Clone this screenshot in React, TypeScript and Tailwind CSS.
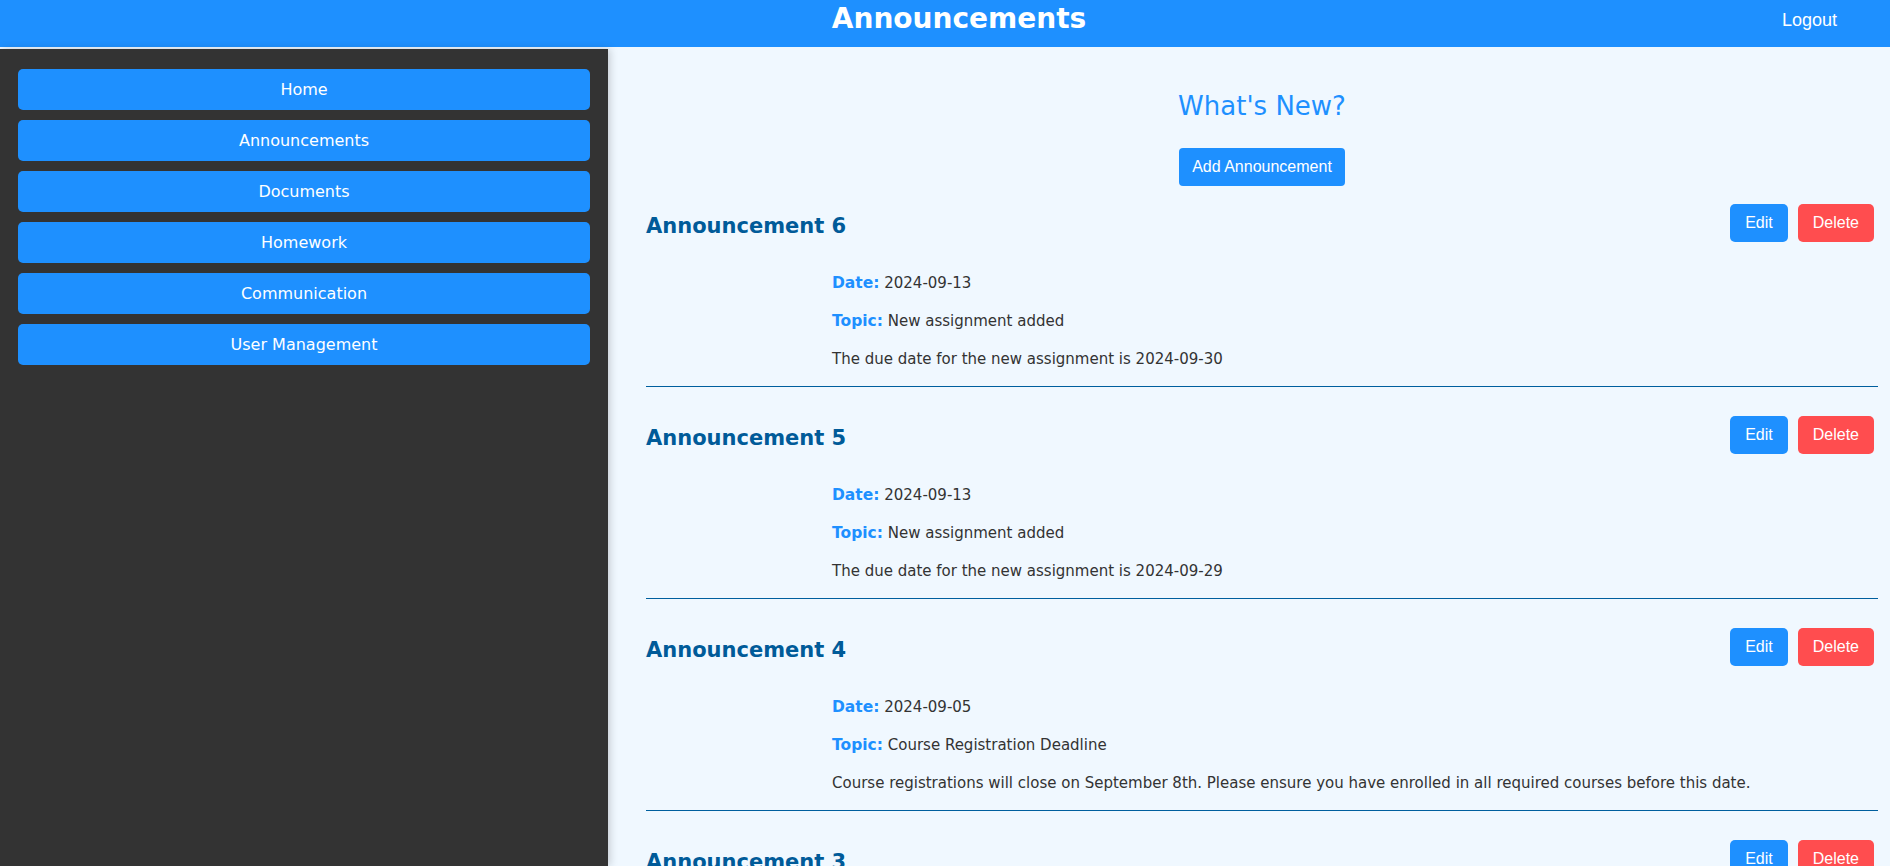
const NAV = ["Home", "Announcements", "Documents", "Homework", "Communication", "User Management"];

type Announcement = {
  id: number;
  date: string;
  topic: string;
  body: string;
};

const ANNOUNCEMENTS: Announcement[] = [
  { id: 6, date: "2024-09-13", topic: "New assignment added", body: "The due date for the new assignment is 2024-09-30" },
  { id: 5, date: "2024-09-13", topic: "New assignment added", body: "The due date for the new assignment is 2024-09-29" },
  {
    id: 4,
    date: "2024-09-05",
    topic: "Course Registration Deadline",
    body: "Course registrations will close on September 8th. Please ensure you have enrolled in all required courses before this date.",
  },
  { id: 3, date: "2024-09-01", topic: "Welcome Back", body: "Classes for the fall semester start on September 2nd." },
  { id: 2, date: "2024-08-25", topic: "Orientation", body: "Orientation for new students will be held on August 30th." },
  { id: 1, date: "2024-08-20", topic: "Portal Launch", body: "The new course portal is now available to all students." },
];

const SANS = "font-['DejaVu_Sans',sans-serif]";
const ARIAL = "font-['Liberation_Sans',Arial,sans-serif]";

function AnnouncementItem({ item }: { item: Announcement }) {
  return (
    <div className="mt-[18px] [&:not(:first-child)]:mt-[29px] border-b border-[#005f9e] pb-[16px]">
      <div className="flex h-[38px] items-center justify-between">
        <h3 className={`${SANS} mt-[7px] text-[21px] font-bold text-[#005b99]`}>Announcement {item.id}</h3>
        <div className={`${ARIAL} mr-[4px] flex gap-[10px]`}>
          <button className="h-[38px] rounded-[5px] bg-[#1e90ff] px-[15px] text-[16px] text-white">Edit</button>
          <button className="h-[38px] rounded-[5px] bg-[#ff4d4f] px-[15px] text-[16px] text-white">Delete</button>
        </div>
      </div>
      <div className={`${SANS} mt-[30px] space-y-[16px] pl-[186px] text-[15px] leading-[22px] text-[#333]`}>
        <p>
          <strong className="text-[15.5px] font-bold text-[#1e90ff]">Date:</strong> {item.date}
        </p>
        <p>
          <strong className="text-[15.5px] font-bold text-[#1e90ff]">Topic:</strong> {item.topic}
        </p>
        <p>{item.body}</p>
      </div>
    </div>
  );
}

export default function App() {
  return (
    <div className="flex h-screen flex-col overflow-hidden bg-[#f0f8ff]">
      <header className="grid h-[47px] shrink-0 grid-cols-[1fr_auto_1fr] bg-[#1e90ff] text-white">
        <div />
        <h1 className={`${SANS} pl-[28px] pt-[3px] text-[28px] font-bold leading-8`}>Announcements</h1>
        <div className="flex justify-end">
          <button className={`${ARIAL} self-start pr-[53px] pt-[9px] text-[18px] leading-[22px]`}>Logout</button>
        </div>
      </header>

      <div className="mt-[2px] flex min-h-0 flex-1">
        <aside className="relative z-10 flex w-[608px] shrink-0 flex-col gap-[10px] bg-[#333] px-[18px] pt-[20px] shadow-[2px_0_8px_rgba(0,0,0,0.18)]">
          {NAV.map((label) => (
            <button
              key={label}
              className={`${SANS} h-[41px] w-full rounded-[5px] bg-[#1e90ff] text-[16px] text-white`}
            >
              {label}
            </button>
          ))}
        </aside>

        <main className="min-w-0 flex-1 overflow-hidden pl-[38px] pr-[12px] pt-[42px]">
          <h2 className={`${SANS} text-center text-[26px] leading-[30px] text-[#1e90ff]`}>What's New?</h2>
          <div className="mt-[27px] flex justify-center">
            <button className={`${ARIAL} h-[38px] rounded-[4px] bg-[#1e90ff] px-[13px] text-[16px] text-white`}>
              Add Announcement
            </button>
          </div>
          <div>
            {ANNOUNCEMENTS.map((a) => (
              <AnnouncementItem key={a.id} item={a} />
            ))}
          </div>
        </main>
      </div>
    </div>
  );
}
